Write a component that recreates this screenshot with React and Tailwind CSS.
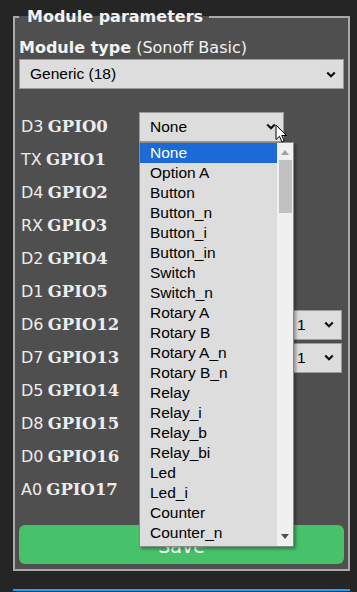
import React from 'react'

const sans = { fontFamily: '"DejaVu Sans", Verdana, sans-serif' }
const serif = { fontFamily: '"DejaVu Serif", Georgia, serif' }
const arial = { fontFamily: '"Liberation Sans", Arial, sans-serif' }

const rows = [
  ['D3', 'GPIO0'],
  ['TX', 'GPIO1'],
  ['D4', 'GPIO2'],
  ['RX', 'GPIO3'],
  ['D2', 'GPIO4'],
  ['D1', 'GPIO5'],
  ['D6', 'GPIO12', true],
  ['D7', 'GPIO13', true],
  ['D5', 'GPIO14'],
  ['D8', 'GPIO15'],
  ['D0', 'GPIO16'],
  ['A0', 'GPIO17'],
]

const options = [
  'None', 'Option A', 'Button', 'Button_n', 'Button_i', 'Button_in', 'Switch', 'Switch_n',
  'Rotary A', 'Rotary B', 'Rotary A_n', 'Rotary B_n', 'Relay', 'Relay_i', 'Relay_b', 'Relay_bi',
  'Led', 'Led_i', 'Counter', 'Counter_n',
]

function Chevron() {
  return (
    <svg width="10" height="7" viewBox="0 0 10 7" aria-hidden>
      <path d="M1.2 1.5 L5 5.2 L8.8 1.5" fill="none" stroke="#111" strokeWidth="2.2" />
    </svg>
  )
}

function Select({ value, className = '' }) {
  return (
    <div
      className={`flex h-[30px] items-center justify-between border border-[#9a9a9a] bg-[#dddddd] pr-[7px] pl-[10px] text-[15.5px] text-black ${className}`}
      style={arial}
    >
      <span>{value}</span>
      <Chevron />
    </div>
  )
}

export default function App() {
  return (
    <div className="relative h-[592px] w-[357px] overflow-hidden bg-[#252525]">
      <fieldset className="mt-[8px] ml-[13px] w-[337px] border-2 border-[#a9a9a9] bg-[#4f4f4f] px-[4px] pb-[5px]">
        <legend
          className="px-[8px] pr-[6px] text-[16px] leading-[17px] font-bold text-[#f2f2f2]"
          style={sans}
        >
          Module parameters
        </legend>
        <div className="mt-[14px] text-[16px] leading-[18px] text-[#f2f2f2]" style={sans}>
          <b>Module type</b> (Sonoff Basic)
        </div>
        <Select value="Generic (18)" className="mt-[2px]" />

        <div className="mt-[21px] flex flex-col">
          {rows.map(([pin, gpio, idx]) => (
            <div key={gpio} className="flex h-[33px] items-center">
              <div className="w-[120px] pl-[2px] text-[16px] text-[#ececec]">
                <span style={sans}>{pin}</span>{' '}
                <b className="text-[16.5px]" style={serif}>
                  {gpio}
                </b>
              </div>
              <Select value="None" className="w-[145px]" />
              {idx ? <Select value="1" className="mr-[2px] ml-auto w-[56px]" /> : null}
            </div>
          ))}
        </div>

        <button
          type="button"
          className="mt-[19px] h-[39px] w-full rounded-[6px] bg-[#47c26a] pt-[3px] text-[19px] text-white"
          style={sans}
        >
          Save
        </button>
      </fieldset>
      <div className="mt-[18px] ml-[13px] h-[2px] w-[337px] bg-[#1fa3ec]" />

      {/* open dropdown list */}
      <div className="absolute top-[142px] left-[139px] flex h-[405px] w-[155px] border border-[#8a8a8a] bg-[#dddddd] shadow-[2px_2px_3px_rgba(0,0,0,0.35)]">
        <div className="flex flex-1 flex-col text-[15.5px] leading-[20px] text-black" style={arial}>
          {options.map((o, i) => (
            <div
              key={o}
              className={`h-[20px] pl-[10px] ${i === 0 ? 'bg-[#1b6ad8] text-white' : ''}`}
            >
              {o}
            </div>
          ))}
        </div>
        <div className="flex w-[16px] flex-col items-center bg-[#f0f0f0]">
          <svg width="8" height="5" viewBox="0 0 8 5" className="mt-[7px]" aria-hidden>
            <path d="M0 5 L4 0 L8 5 Z" fill="#a3a3a3" />
          </svg>
          <div className="mt-[5px] h-[53px] w-[13px] bg-[#c1c1c1]" />
          <div className="flex-1" />
          <svg width="8" height="5" viewBox="0 0 8 5" className="mb-[7px]" aria-hidden>
            <path d="M0 0 L8 0 L4 5 Z" fill="#505050" />
          </svg>
        </div>
      </div>

      {/* mouse pointer */}
      <svg
        width="13"
        height="20"
        viewBox="0 0 13 20"
        className="absolute top-[124px] left-[275px]"
        aria-hidden
      >
        <path
          d="M1 1 L1 15.5 L4.5 12.3 L7 18 L9.2 17 L6.8 11.5 L11.5 11.5 Z"
          fill="#fff"
          stroke="#000"
          strokeWidth="1"
          strokeLinejoin="round"
        />
      </svg>
    </div>
  )
}
